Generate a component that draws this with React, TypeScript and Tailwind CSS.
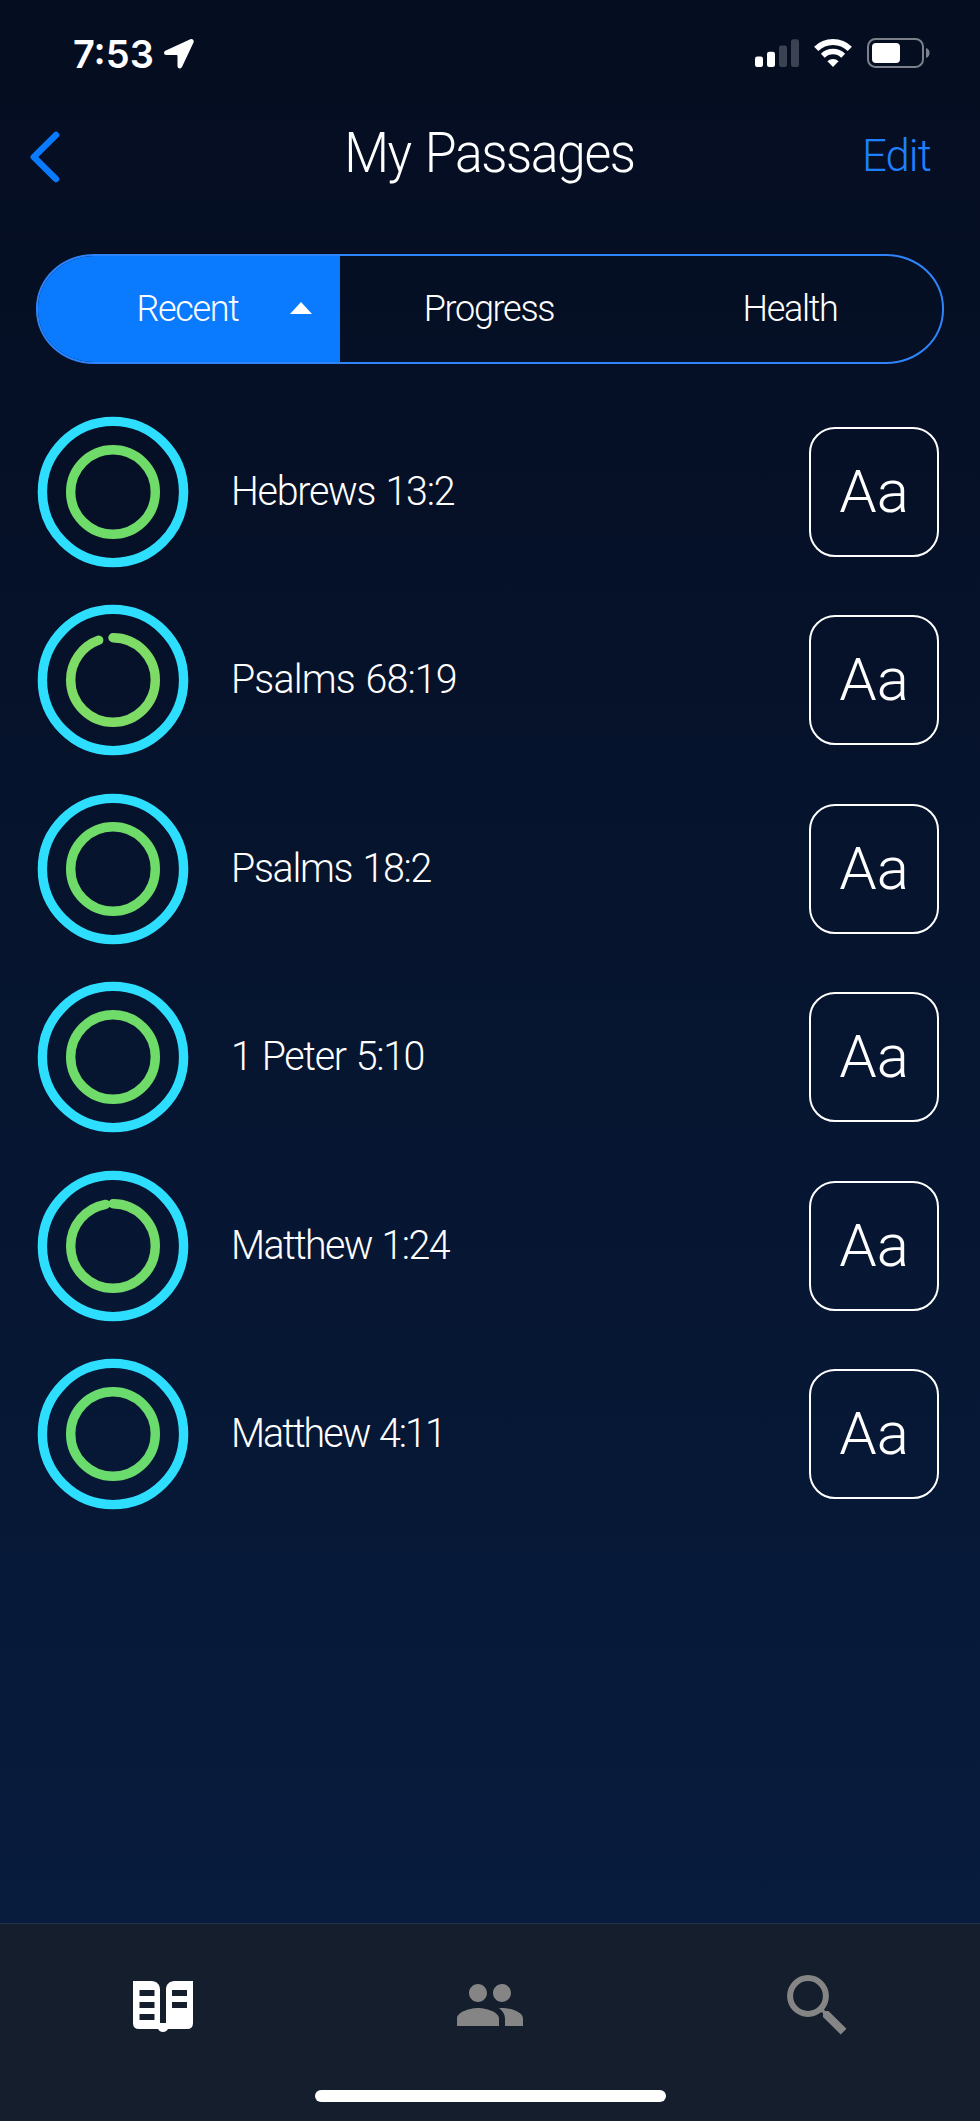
import React, { useState } from 'react';
import { MdPeople } from 'react-icons/md';

interface Passage {
  id: number;
  title: string;
  tracking: string;
  progress: number;
  color: string;
}

const passages: Passage[] = [
  { id: 1, title: 'Hebrews 13:2', tracking: 'tracking-[-1.3px]', progress: 1, color: '#6fdb69' },
  { id: 2, title: 'Psalms 68:19', tracking: 'tracking-[-0.9px]', progress: 0.945, color: '#7edb65' },
  { id: 3, title: 'Psalms 18:2', tracking: 'tracking-[-1.35px]', progress: 1, color: '#6fdb69' },
  { id: 4, title: '1 Peter 5:10', tracking: 'tracking-[-1.4px]', progress: 1, color: '#6fdb69' },
  { id: 5, title: 'Matthew 1:24', tracking: 'tracking-[-1.7px]', progress: 0.972, color: '#73db69' },
  { id: 6, title: 'Matthew 4:11', tracking: 'tracking-[-2.05px]', progress: 1, color: '#6adb6d' },
];

const tabs = ['Recent', 'Progress', 'Health'];

const StatusBar: React.FC = () => (
  <div className="flex h-[108px] items-center justify-between pl-[73px] pr-[50px]">
    <div className="flex items-center gap-[11px]">
      <span className="w-[80px] whitespace-nowrap font-['Inter'] text-[38px] font-semibold leading-none">
        7:53
      </span>
      <svg width="30" height="30" viewBox="0 0 30 30" fill="white">
        <path d="M26.3.3 1.8 11.6C-.8 12.8-.4 16 2.4 16h10.2c.6 0 .9.3.9.9v10.2c0 2.8 3.4 3.2 4.6.6L29.5 3.5C30.4 1.3 28.5-.7 26.3.3Z" />
      </svg>
    </div>
    <div className="-mt-[2px] flex items-center">
      <svg width="44" height="30" viewBox="0 0 44 30" fill="white">
        <rect x="0" y="18.5" width="8" height="10.5" rx="2.2" />
        <rect x="12" y="13.7" width="8" height="15.3" rx="2.2" />
        <rect x="24" y="7.5" width="8" height="21.5" rx="2.2" opacity=".22" />
        <rect x="36" y="1.2" width="8" height="27.8" rx="2.2" opacity=".22" />
      </svg>
      <svg className="ml-[15px]" width="38" height="30" viewBox="0 0 38 30" fill="none">
        <path d="M2.2 10.8a24 24 0 0 1 33.6 0" stroke="white" strokeWidth="6" />
        <path d="M8.8 17.7a14.6 14.6 0 0 1 20.4 0" stroke="white" strokeWidth="5.5" />
        <path d="M13.4 23.2a8.1 8.1 0 0 1 11.2 0L19 29Z" fill="white" />
      </svg>
      <svg className="ml-[15px]" width="63" height="30" viewBox="0 0 63 30" fill="none">
        <rect x="1" y="1" width="55" height="28" rx="7.5" stroke="#7b808b" strokeWidth="2" />
        <rect x="5" y="5" width="28" height="20" rx="4" fill="white" />
        <path d="M59 10c4.8 1.2 4.8 8.8 0 10Z" fill="#7b808b" />
      </svg>
    </div>
  </div>
);

const ProgressRings: React.FC<{ progress: number; color: string }> = ({ progress, color }) => (
  <svg className="shrink-0" width="152" height="152" viewBox="-76 -76 152 152" fill="none">
    <circle r="70.6" stroke="#2edeff" strokeWidth="9.4" />
    <circle
      r="42.3"
      stroke={color}
      strokeWidth="9.4"
      strokeLinecap="round"
      pathLength={1}
      strokeDasharray={progress < 1 ? `${progress} 1` : undefined}
      transform="rotate(-90)"
    />
  </svg>
);

const BookIcon: React.FC = () => (
  <svg width="60" height="52" viewBox="0 0 60 52">
    <path
      fill="white"
      fillRule="evenodd"
      d="M0 0h18.5C23.5 0 27 3.5 27 8.5V42h6V8.5C33 3.5 36.5 0 41.5 0H60v42q0 6-6 6H35q-1.6 3-5 3t-5-3H6q-6 0-6-6ZM6.5 9v6h15V9ZM6.5 21v6h15v-6ZM6.5 33v6h15v-6ZM39 9v6h15V9ZM39 21v6h15v-6Z"
    />
  </svg>
);

const SearchIcon: React.FC = () => (
  <svg width="60" height="60" viewBox="0 0 60 60">
    <circle cx="21" cy="21" r="17.9" fill="none" stroke="#858585" strokeWidth="6" />
    <path d="m33 36.5 3.5-3.5 1.5 3H41.5L59.5 53.7 53.7 59.5 36 42v-4Z" fill="#858585" />
  </svg>
);

export default function App() {
  const [activeTab, setActiveTab] = useState('Recent');

  return (
    <div className="flex h-[2121px] w-[980px] flex-col overflow-hidden bg-linear-to-b from-[#050d20] via-[#061530] via-50% to-[#081d40] font-['Roboto',sans-serif] font-light text-white">
      <StatusBar />

      <header className="grid h-[146px] grid-cols-[1fr_auto_1fr] items-start pl-[30px] pr-[49px]">
        <button className="mt-[23px] w-fit">
          <svg width="30" height="52" viewBox="0 0 30 52" fill="none">
            <path d="M26 4 3.8 26 26 48" stroke="#0a7aff" strokeWidth="6.5" strokeLinecap="round" strokeLinejoin="round" />
          </svg>
        </button>
        <h1 className="-mr-[17px] mt-[13px] scale-x-[0.94] text-[55px] leading-[64px] tracking-[-1.5px] [word-spacing:3px]">
          My Passages
        </h1>
        <button className="mt-[18px] origin-right scale-x-[0.97] justify-self-end text-[45px] leading-[60px] tracking-[-1px] text-[#1f80ff]">
          Edit
        </button>
      </header>

      <div className="mx-[36px] grid h-[110px] shrink-0 grid-cols-[302px_301px_301px] overflow-hidden rounded-[58px/54px] border-2 border-[#2f84fb]">
        {tabs.map((tab) => (
          <button
            key={tab}
            onClick={() => setActiveTab(tab)}
            className={`flex items-center justify-center pb-[1px] pr-[3px] text-[36px] tracking-[-1.3px] ${
              activeTab === tab ? 'bg-[#0a7aff]' : ''
            }`}
          >
            <span className="relative">
              {tab}
              {activeTab === tab && (
                <svg className="absolute left-[154px] top-[20px]" width="22" height="12" viewBox="0 0 22 12">
                  <path d="M11 0 22 12H0Z" fill="white" />
                </svg>
              )}
            </span>
          </button>
        ))}
      </div>

      <main className="flex-1 pt-[33.5px]">
        {passages.map((passage) => (
          <div key={passage.id} className="flex h-[188.5px] items-center pl-[37px] pr-[41px]">
            <ProgressRings progress={passage.progress} color={passage.color} />
            <span
              className={`mb-[2px] ml-[42px] flex-1 origin-left scale-x-[0.96] text-[41px] leading-[48px] [word-spacing:2px] ${passage.tracking}`}
            >
              {passage.title}
            </span>
            <button className="flex h-[130px] w-[130px] items-center justify-center rounded-[26px] border-2 border-white text-[60px] leading-none">
              Aa
            </button>
          </div>
        ))}
      </main>

      <nav className="h-[198px] shrink-0 border-t border-[#24324c] bg-[#151e2c]">
        <div className="grid h-[164px] grid-cols-3 items-center justify-items-center">
          <button className="mt-[2px]"><BookIcon /></button>
          <button className="-mt-[2px]"><MdPeople size={72} color="#858585" /></button>
          <button className="-mt-[2px]"><SearchIcon /></button>
        </div>
        <div className="mx-auto mt-[2px] h-[12px] w-[351px] rounded-full bg-white" />
      </nav>
    </div>
  );
}
